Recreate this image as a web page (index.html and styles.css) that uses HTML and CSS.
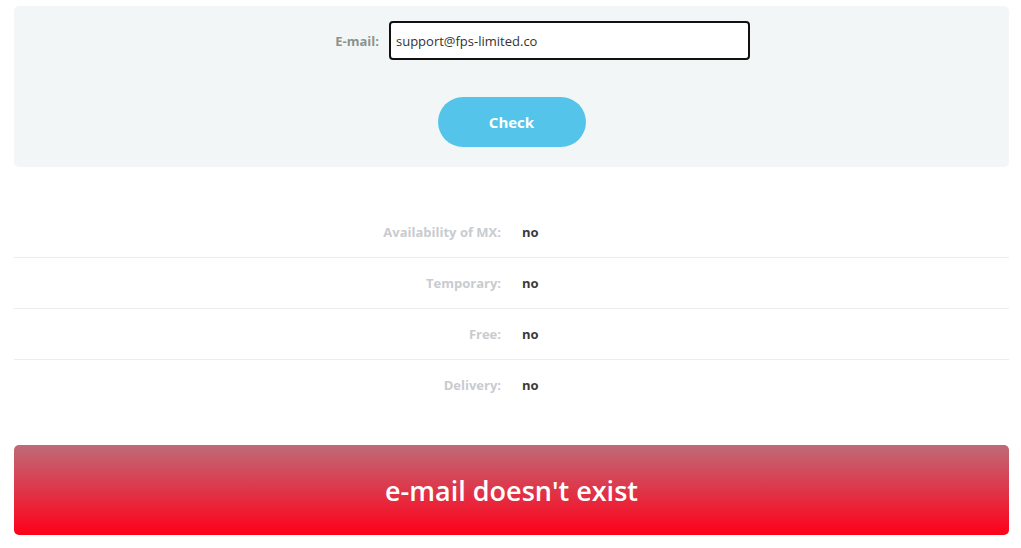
FILE: index.html
```html
<!DOCTYPE html>
<html lang="en">
<head>
    <meta charset="UTF-8">
    <meta name="viewport" content="width=device-width, initial-scale=1.0">
    <title>E-mail check</title>
    <link rel="stylesheet" href="styles.css">
</head>
<body>
    <div class="page">
        <div class="check-panel">
            <div class="field">
                <label for="email">E-mail:</label>
                <input type="text" id="email" value="support@fps-limited.co">
            </div>
            <div class="actions">
                <button class="check-button">Check</button>
            </div>
        </div>

        <div class="results">
            <div class="result-row">
                <span class="result-label">Availability of MX:</span>
                <span class="result-value">no</span>
            </div>
            <div class="result-row">
                <span class="result-label">Temporary:</span>
                <span class="result-value">no</span>
            </div>
            <div class="result-row">
                <span class="result-label">Free:</span>
                <span class="result-value">no</span>
            </div>
            <div class="result-row">
                <span class="result-label">Delivery:</span>
                <span class="result-value">no</span>
            </div>
        </div>

        <div class="verdict">e-mail doesn't exist</div>
    </div>
</body>
</html>
```

FILE: styles.css
```css
body {
    font-family: "Open Sans", "Noto Sans", Arial, sans-serif;
    margin: 0;
    padding: 0;
    background-color: #fff;
}

.page {
    padding: 6px 12px 0 14px;
}

.check-panel {
    background-color: #f3f6f7;
    border-radius: 5px;
    padding: 15px 0 20px 0;
}

.field {
    display: grid;
    grid-template-columns: 375px 361px;
    align-items: center;
}

.field label {
    text-align: right;
    padding-right: 10px;
    font-size: 13px;
    font-weight: 700;
    color: #8d928c;
}

.field input {
    box-sizing: border-box;
    height: 39px;
    width: 361px;
    margin: 0;
    padding: 0 5px;
    border: 2px solid #111;
    border-radius: 4px;
    font-family: inherit;
    font-size: 13px;
    color: #333;
    background-color: #fff;
}

.actions {
    display: flex;
    justify-content: center;
    margin-top: 37px;
}

.check-button {
    width: 148px;
    height: 50px;
    border: none;
    border-radius: 25px;
    background-color: #55c4ea;
    color: #fff;
    font-family: inherit;
    font-size: 15px;
    font-weight: 700;
    cursor: pointer;
}

.results {
    margin-top: 40px;
}

.result-row {
    display: grid;
    grid-template-columns: 487px 1fr;
    column-gap: 21px;
    align-items: center;
    height: 50px;
    border-bottom: 1px solid #ececec;
}

.result-row:last-child {
    border-bottom: none;
}

.result-label {
    text-align: right;
    font-size: 13px;
    font-weight: 700;
    color: #c8cbd0;
}

.result-value {
    font-size: 13px;
    font-weight: 700;
    color: #3a3a3a;
}

.verdict {
    margin-top: 35px;
    height: 90px;
    border-radius: 5px;
    background: linear-gradient(to bottom, #be6b78, #ff0019);
    color: #fff;
    font-size: 27px;
    font-weight: 600;
    display: flex;
    align-items: center;
    justify-content: center;
}
```
